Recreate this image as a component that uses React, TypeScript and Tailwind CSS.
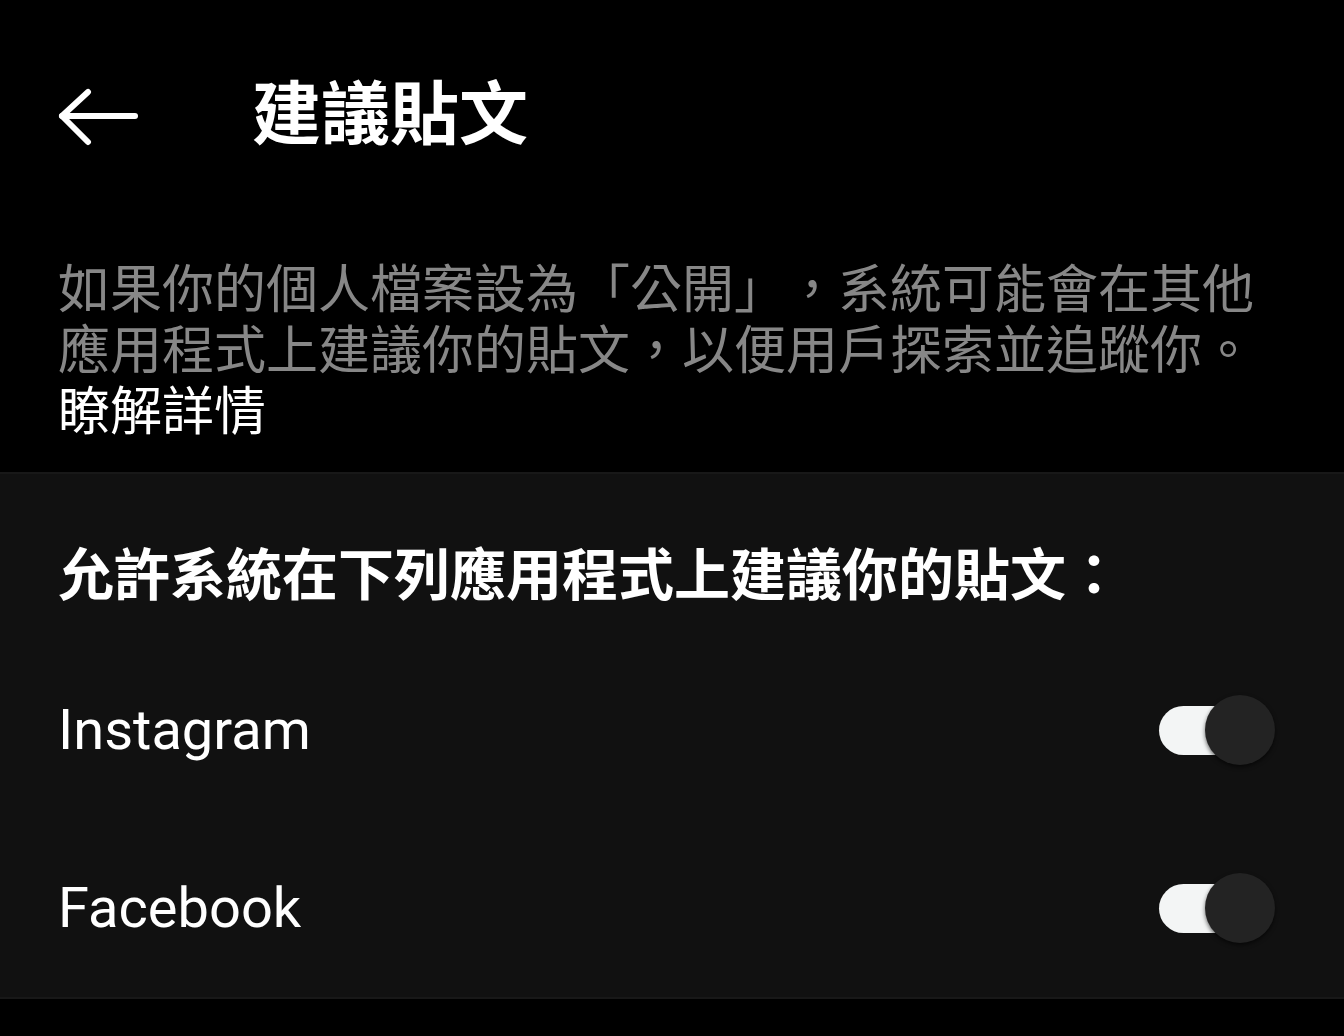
import React from 'react';

const cjk = "font-['Noto_Sans_CJK_TC','Noto_Sans',sans-serif] [text-spacing-trim:space-all]";

const Toggle: React.FC = () => (
  <div className="relative w-[116px] h-[70px] flex items-center">
    <div className="w-[100px] h-[49px] rounded-full bg-[#f3f5f5]" />
    <div className="absolute right-0 top-0 w-[70px] h-[70px] rounded-full bg-[#232323] shadow-[0_2px_4px_rgba(0,0,0,0.6)]" />
  </div>
);

const Row: React.FC<{ label: string }> = ({ label }) => (
  <div className="h-[178px] flex items-center justify-between pl-[58px] pr-[69px]">
    <span className="font-['Roboto',sans-serif] text-[56px] text-white leading-none">{label}</span>
    <Toggle />
  </div>
);

export default function App() {
  return (
    <div className={`min-h-screen bg-black ${cjk}`}>
      <div className="h-[234px] flex items-center pl-[58px]">
        <svg width="80" height="60" viewBox="0 0 80 60" fill="none" stroke="white" strokeWidth="6" strokeLinecap="round" strokeLinejoin="round">
          <path d="M4 29H77" />
          <path d="M30 5L4 29L30 55" />
        </svg>
        <h1 className="ml-[114px] mb-[16px] text-[69px] font-bold text-white leading-none">建議貼文</h1>
      </div>

      <div className="px-[58px] pt-[21px] pb-[34px] text-[52px] leading-[61px]">
        <p className="text-[#878787]">
          如果你的個人檔案設為「公開」，系統可能會在其他應用程式上建議你的貼文，以便用戶探索並追蹤你。
        </p>
        <p className="text-white">瞭解詳情</p>
      </div>

      <div className="bg-[#111111] border-t-2 border-[#181818] border-b-2">
        <div className="pt-[62px] pl-[58px] text-[56px] font-bold text-white leading-[70px]">
          允許系統在下列應用程式上建議你的貼文：
        </div>
        <div className="mt-[35px]">
          <Row label="Instagram" />
          <Row label="Facebook" />
        </div>
      </div>
    </div>
  );
}
